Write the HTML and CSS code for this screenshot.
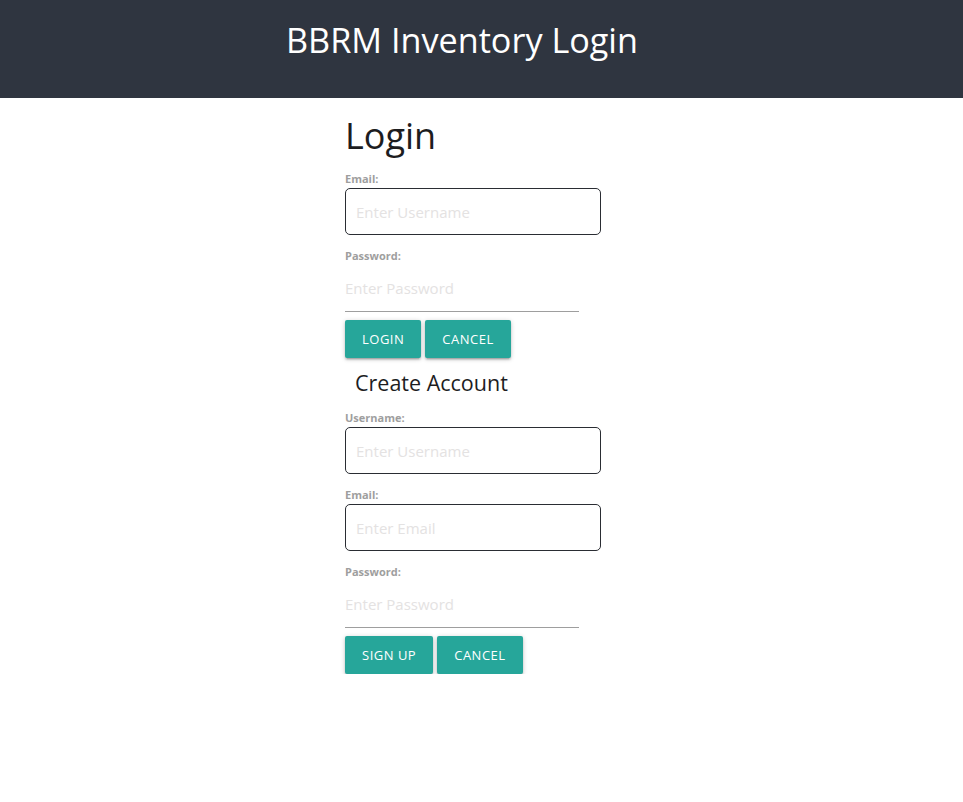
FILE: index.html
```html
<!DOCTYPE html>
<html lang="en">
<head>
<meta charset="utf-8">
<title>BBRM Inventory Login</title>
<link rel="stylesheet" href="styles.css">
</head>
<body>
<header class="topbar">
  <h1 class="title">BBRM Inventory Login</h1>
</header>
<main class="page">
  <section class="panel">
    <h2 class="heading">Login</h2>
    <form class="form">
      <label class="label" for="login-email">Email:</label>
      <input class="box" id="login-email" type="text" placeholder="Enter Username">
      <label class="label label-gap" for="login-pass">Password:</label>
      <input class="line" id="login-pass" type="password" placeholder="Enter Password">
      <div class="actions">
        <button type="button" class="btn">Login</button>
        <button type="button" class="btn">Cancel</button>
      </div>
    </form>
    <h3 class="subheading">Create Account</h3>
    <form class="form">
      <label class="label" for="su-user">Username:</label>
      <input class="box" id="su-user" type="text" placeholder="Enter Username">
      <label class="label label-gap" for="su-email">Email:</label>
      <input class="box" id="su-email" type="text" placeholder="Enter Email">
      <label class="label label-gap" for="su-pass">Password:</label>
      <input class="line" id="su-pass" type="password" placeholder="Enter Password">
      <div class="actions">
        <button type="button" class="btn">Sign Up</button>
        <button type="button" class="btn">Cancel</button>
      </div>
    </form>
  </section>
</main>
</body>
</html>
```

FILE: styles.css
```css
* {
  box-sizing: border-box;
}

html, body {
  margin: 0;
  padding: 0;
  background: #ffffff;
  font-family: "Open Sans", "Noto Sans", "DejaVu Sans", sans-serif;
  color: rgba(0, 0, 0, 0.87);
}

.topbar {
  height: 98px;
  background: #2f3540;
  display: flex;
  align-items: flex-start;
  padding-left: 286px;
}

.title {
  margin: 18px 0 0 0;
  font-size: 34.2px;
  line-height: 44px;
  font-weight: 400;
  color: #ffffff;
}

.page {
  display: flex;
  padding-left: 345px;
}

.panel {
  width: 256px;
  display: flex;
  flex-direction: column;
}

.heading {
  margin: 16px 0 15px 0;
  font-size: 36px;
  line-height: 43px;
  font-weight: 400;
  color: #1d1d1f;
}

.form {
  display: flex;
  flex-direction: column;
}

.label {
  display: block;
  font-size: 11px;
  line-height: 14px;
  font-weight: 700;
  color: #9e9e9e;
  margin-bottom: 2px;
}

.label-gap {
  margin-top: 14px;
}

.box {
  width: 256px;
  height: 47px;
  border: 1px solid #2a2d33;
  border-radius: 5px;
  padding: 0 10px;
  font-family: inherit;
  font-size: 15px;
  color: #333;
  background: #fff;
  outline: none;
}

.line {
  width: 234px;
  height: 47px;
  border: none;
  border-bottom: 1px solid #9e9e9e;
  padding: 0;
  font-family: inherit;
  font-size: 15px;
  color: #333;
  background: transparent;
  outline: none;
}

.box::placeholder,
.line::placeholder {
  color: #e4e2e2;
}

.actions {
  display: flex;
  gap: 4px;
  margin-top: 8px;
}

.btn {
  height: 38px;
  padding: 0 17px;
  border: none;
  border-radius: 2px;
  background: #26a69a;
  color: #ffffff;
  font-family: inherit;
  font-size: 13px;
  letter-spacing: 0.5px;
  text-transform: uppercase;
  box-shadow: 0 2px 2px 0 rgba(0,0,0,0.14), 0 3px 1px -2px rgba(0,0,0,0.12), 0 1px 5px 0 rgba(0,0,0,0.2);
  cursor: pointer;
}

.subheading {
  margin: 11px 0 14px 10px;
  font-size: 21.5px;
  line-height: 28px;
  font-weight: 400;
  color: #1d1d1f;
}
```
